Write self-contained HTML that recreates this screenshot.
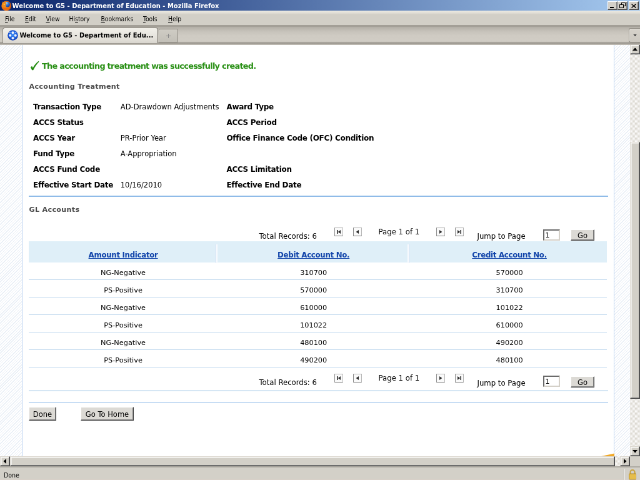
<!DOCTYPE html>
<html lang="en">
<head>
<meta charset="utf-8">
<title>Welcome to G5 - Department of Education - Mozilla Firefox</title>
<style>
html,body{margin:0;padding:0;width:640px;height:480px;overflow:hidden;background:#d4d0c8}
#root{will-change:transform;position:absolute;left:0;top:0;width:1024px;height:768px;transform:scale(.625);transform-origin:0 0;overflow:hidden;background:#d4d0c8;font-family:"DejaVu Sans","Liberation Sans",sans-serif;font-size:11.7px;color:#000}
#root *{box-sizing:border-box}
.abs{position:absolute;white-space:nowrap}
.ui{font-family:"DejaVu Sans Condensed","DejaVu Sans","Liberation Sans",sans-serif}
/* title bar */
#title{left:0;top:0;width:1024px;height:17.4px;background:linear-gradient(90deg,#0a246a 0%,#a6caf0 100%)}
#title .t{left:19.6px;top:0;height:18px;line-height:19.4px;color:#fff;font-weight:bold;font-size:11.1px}
.wb{top:2px;width:16px;height:14px;background:#d4d0c8;border:1px solid;border-color:#fff #404040 #404040 #fff;box-shadow:inset -1px -1px 0 #808080}
/* menubar */
#menu{left:0;top:17.4px;width:1024px;height:23px;background:linear-gradient(180deg,#eceae2 0,#e0ddd5 4px,#d2cfc7 6px,#d2cfc7 100%)}
#menu span{position:absolute;top:0.4px;height:24px;line-height:25px;font-size:10.3px}
#menu u{text-decoration:underline}
/* tabs */
#tabs{z-index:3;left:0;top:39.6px;width:1024px;height:32px;background:linear-gradient(180deg,#a39f97 0,#a39f97 2.5px,#b4b0a8 3.5px,#c6c2ba 10px,#cfcbc3 17px,#d0ccc4 26.4px,#aaa69e 27.6px,#9e9a92 29.4px,#b8b4ac 31px,#c8c4bc 32px)}
#tab{left:4px;top:4.6px;width:249px;height:24.4px;background:linear-gradient(180deg,#f2f0ea,#e4e1da 70%,#d9d6cf);border:1px solid #8c8880;border-right:1.4px solid #6e6a62;border-bottom:none;border-radius:4px 4px 0 0}
#tab .t{left:26.4px;top:-1px;line-height:26px;font-size:11.1px;font-weight:bold}
#newtab{left:253.6px;top:6px;width:31px;height:22px;background:linear-gradient(180deg,#cfccc4,#c3c0b8);border:1.2px solid #8e8a82;border-radius:2px 2px 0 0}
#alltabs{left:1005.6px;top:5.6px;width:20px;height:22.4px;background:linear-gradient(180deg,#d6d2ca,#cdc9c1);border:1.4px solid #908c84;border-right:none;border-radius:3px 0 0 3px;box-shadow:inset 1px 1px 0 #e6e3dc}
/* content */
#view{left:0;top:71px;width:1008px;height:659px;background:#f5f8fb;overflow:hidden;
 background-image:repeating-linear-gradient(135deg,#ffffff 0,#ffffff 2.1px,#e8eef6 2.1px,#e8eef6 3.1px)}
#page{left:35px;top:0;width:948.4px;height:659px;background:#fff;border-left:1.4px solid #bdd3f0;border-right:1.4px solid #bdd3f0}
#page .b{font-weight:bold}
.l,.th,#page .b{font-size:12px;letter-spacing:-0.3px}
#page .hd{font-size:11.2px;letter-spacing:0.28px;margin-top:1.4px}
.l{font-weight:bold;height:16px;line-height:16px;margin-top:1.8px}
.v{height:16px;line-height:16px}
#page>.v{margin-top:1.8px;font-size:11.5px}
.hd{font-weight:bold;color:#4a4a4a;height:16px;line-height:16px}
.ln{left:10px;width:927px;height:1.6px;background:#8fbbe8}
.nb{width:14px;height:14px;border:1px solid;border-color:#b4b4b4 #b4b4b4 #7c7c7c #8c8c8c;background:#fafafa}
.nb svg{position:absolute;left:0;top:0}
.btn{height:18px;line-height:18.6px;text-align:center;background:#dcdad5;border:1px solid;border-color:#fff #404040 #404040 #fff;box-shadow:inset -1px -1px 0 #808080;font-size:11.5px}
.inp{height:17.6px;width:27px;background:#fff;border:2px solid;border-color:#6a6a6a #d4d0c8 #d4d0c8 #6a6a6a;line-height:15.5px;font-size:11px;padding-left:1.5px}
.th{top:314.6px;height:34.8px;line-height:45.4px;text-align:center;font-weight:bold;color:#1144aa;padding-left:3px}
#page .th{font-size:11.8px}
.th span{text-decoration:underline}
.td{height:28px;line-height:33px;font-size:11.3px;padding-left:3px;text-align:center;border-bottom:1px solid #c0d8ee}
/* scrollbars */
.sbtn{background:#d3d0c8;border:1px solid;border-color:#dcd8d0 #404040 #404040 #dcd8d0;box-shadow:inset -1px -1px 0 #808080, inset 1.6px 1.6px 0 #fbfaf8}
.track{background:#ebe9e5 repeating-conic-gradient(#ffffff 0 25%,#d8d4cc 0 50%) 0 0/2px 2px}
#status{left:0;top:745.6px;width:1024px;height:22.4px;background:#d3d0c8;border-top:2.4px solid #aeaba3;border-bottom:1.4px solid #d8d0c8}
</style>
</head>
<body>
<div id="root">

<!-- title bar -->
<div id="title" class="abs ui">
  <svg class="abs" style="left:1.6px;top:0.8px" width="16.4" height="16.4" viewBox="0 0 16 16"><defs><radialGradient id="fo" cx="0.4" cy="0.45" r="0.65"><stop offset="0" stop-color="#fbc23a"/><stop offset="0.55" stop-color="#ee7c14"/><stop offset="1" stop-color="#b8420a"/></radialGradient><radialGradient id="gl" cx="0.35" cy="0.25" r="0.8"><stop offset="0" stop-color="#a8dcf8"/><stop offset="0.45" stop-color="#2f78d8"/><stop offset="1" stop-color="#143c9c"/></radialGradient></defs><circle cx="8" cy="8.2" r="7.7" fill="url(#fo)"/><circle cx="9.4" cy="6" r="4.3" fill="url(#gl)"/><path d="M1.2 4.6 L2.6 1.2 L4.6 3.4 C6.6 2.6 8.4 3.6 8.2 5.4 L6.4 6.6 C8 7.6 8.2 9.6 6.6 10.8 C4.6 11.8 2.2 10.4 1.6 8 Z" fill="#f08a1a"/><path d="M3 5.4 C4.2 4.6 5.6 4.8 6.4 5.6 L4.6 6.8 Z" fill="#ffd048"/><path d="M6.6 10.8 C9 12.2 12.4 11 13.8 8.2 C14.6 11.4 12 14.6 8.4 14.6 C5.4 14.6 3.2 12.8 2.4 10.2 C3.6 11.2 5.2 11.4 6.6 10.8Z" fill="#e8680e"/></svg>
  <div class="abs t">Welcome to G5 - Department of Education - Mozilla Firefox</div>
  <div class="abs wb" style="left:972px"><div class="abs" style="left:3px;top:8.2px;width:6.4px;height:1.8px;background:#000"></div></div>
  <div class="abs wb" style="left:988px"><div class="abs" style="left:5px;top:1px;width:6.5px;height:6px;border:1px solid #000;border-top-width:1.8px"></div><div class="abs" style="left:2.4px;top:4px;width:6.5px;height:6px;border:1px solid #000;border-top-width:1.8px;background:#d4d0c8"></div></div>
  <div class="abs wb" style="left:1006px"><svg class="abs" style="left:2px;top:2px" width="10" height="9" viewBox="0 0 10 9"><path d="M1.5 1.5 L8.5 7.5 M8.5 1.5 L1.5 7.5" stroke="#000" stroke-width="1.4"/></svg></div>
</div>

<!-- menu bar -->
<div id="menu" class="abs ui">
  <span style="left:8px"><u>F</u>ile</span>
  <span style="left:40px"><u>E</u>dit</span>
  <span style="left:73.5px"><u>V</u>iew</span>
  <span style="left:110.5px">Hi<u>s</u>tory</span>
  <span style="left:161.5px"><u>B</u>ookmarks</span>
  <span style="left:229px"><u>T</u>ools</span>
  <span style="left:269px"><u>H</u>elp</span>
</div>

<!-- tab strip -->
<div id="tabs" class="abs ui">
  <div id="tab" class="abs">
    <svg class="abs" style="left:6.6px;top:3px" width="17" height="17" viewBox="0 0 16 16"><defs><radialGradient id="fv" cx="0.5" cy="0.45" r="0.55"><stop offset="0" stop-color="#3c8cf4"/><stop offset="0.7" stop-color="#1c5cdc"/><stop offset="1" stop-color="#0c34a8"/></radialGradient></defs><circle cx="8" cy="8" r="7.8" fill="url(#fv)"/><circle cx="8" cy="4" r="1.9" fill="#eef2fa"/><circle cx="4" cy="8.2" r="1.9" fill="#eef2fa"/><circle cx="12" cy="8.2" r="1.9" fill="#eef2fa"/><circle cx="8" cy="12.2" r="1.9" fill="#eef2fa"/><circle cx="3.6" cy="3.8" r="1" fill="#9cc0f6"/><circle cx="12.4" cy="3.8" r="1" fill="#9cc0f6"/></svg>
    <div class="abs t">Welcome to G5 - Department of Edu...</div>
  </div>
  <div id="newtab" class="abs"><div class="abs" style="left:11px;top:10px;width:7px;height:1px;background:#888"></div><div class="abs" style="left:14px;top:7px;width:1px;height:7px;background:#888"></div></div>
  <div id="alltabs" class="abs"><svg class="abs" style="left:5px;top:8px" width="8" height="5" viewBox="0 0 8 5"><path d="M1.2 1 H6.8 L4 4Z" fill="#444"/></svg></div>
</div>

<!-- content viewport -->
<div id="view" class="abs">
 <div id="page" class="abs">
  <!-- coordinates inside #page: x = orig-35-1(border), y = orig-71 -->
  <svg class="abs" style="left:10px;top:24px" width="18" height="21" viewBox="10 24 18 21"><path d="M12.8 36.6 L15.2 34.8 L16.6 37.6 C19 33 22 29.6 25.6 26.8 L26.5 27.7 C22.8 31.6 19.8 36 17.2 41.2 L15.2 41.2 Z" fill="#248c10"/></svg>
  <div class="abs b" style="left:31px;top:27.1px;height:16px;line-height:16px;color:#2a9016;font-size:12.9px;letter-spacing:-0.75px">The accounting treatment was successfully created.</div>

  <div class="abs hd" style="left:10.5px;top:58.6px">Accounting Treatment</div>

  <div class="abs l" style="left:17px;top:89.8px">Transaction Type</div>
  <div class="abs v" style="left:156.8px;top:89.8px">AD-Drawdown Adjustments</div>
  <div class="abs l" style="left:326.4px;top:89.8px">Award Type</div>

  <div class="abs l" style="left:17px;top:114.9px">ACCS Status</div>
  <div class="abs l" style="left:326.4px;top:114.9px">ACCS Period</div>

  <div class="abs l" style="left:17px;top:140px">ACCS Year</div>
  <div class="abs v" style="left:156.8px;top:140px">PR-Prior Year</div>
  <div class="abs l" style="left:326.4px;top:140px">Office Finance Code (OFC) Condition</div>

  <div class="abs l" style="left:17px;top:165.1px">Fund Type</div>
  <div class="abs v" style="left:156.8px;top:165.1px">A-Appropriation</div>

  <div class="abs l" style="left:17px;top:190.2px">ACCS Fund Code</div>
  <div class="abs l" style="left:326.4px;top:190.2px">ACCS Limitation</div>

  <div class="abs l" style="left:17px;top:215.3px">Effective Start Date</div>
  <div class="abs v" style="left:156.8px;top:215.3px">10/16/2010</div>
  <div class="abs l" style="left:326.4px;top:215.3px">Effective End Date</div>

  <div class="abs ln" style="top:242px"></div>

  <div class="abs hd" style="left:10.5px;top:255.4px">GL Accounts</div>

  <!-- top pager -->
  <div class="abs" style="left:0;top:292.7px">
   <div class="abs v" style="left:378.4px;top:6px">Total Records: 6</div>
   <div class="abs nb" style="left:498.6px;top:0"><svg width="12" height="12" viewBox="0 0 12 12"><path d="M3 3h1.6v6H3zM9 3 L4.8 6 L9 9Z" fill="#2a2a2a"/></svg></div>
   <div class="abs nb" style="left:528.8px;top:0"><svg width="12" height="12" viewBox="0 0 12 12"><path d="M8 3 L3.6 6 L8 9Z" fill="#2a2a2a"/></svg></div>
   <div class="abs v" style="left:569.6px;top:-0.8px">Page 1 of 1</div>
   <div class="abs nb" style="left:661.8px;top:0"><svg width="12" height="12" viewBox="0 0 12 12"><path d="M4 3 L8.4 6 L4 9Z" fill="#2a2a2a"/></svg></div>
   <div class="abs nb" style="left:692px;top:0"><svg width="12" height="12" viewBox="0 0 12 12"><path d="M7.4 3H9v6H7.4zM3 3 L7.2 6 L3 9Z" fill="#2a2a2a"/></svg></div>
   <div class="abs v" style="left:727.5px;top:6.5px">Jump to Page</div>
   <div class="abs inp" style="left:833px;top:3.3px">1</div>
   <div class="abs btn" style="left:877px;top:3.8px;width:38px">Go</div>
  </div>

  <!-- table header -->
  <div class="abs" style="left:9.6px;top:314.6px;width:925px;height:34.8px;background:#dfeff8"></div>
  <div class="abs" style="left:310.2px;top:319.5px;width:2px;height:30.5px;background:#f8fbfe;box-shadow:-0.8px 0 0 #d4daf4"></div>
  <div class="abs" style="left:616.2px;top:319.5px;width:2px;height:30.5px;background:#f8fbfe;box-shadow:0.8px 0 0 #d4daf4"></div>
  <div class="abs th" style="left:9px;width:301.2px"><span>Amount Indicator</span></div>
  <div class="abs th" style="left:312.2px;width:304px"><span>Debit Account No.</span></div>
  <div class="abs th" style="left:618.2px;width:318.8px"><span>Credit Account No.</span></div>

  <!-- rows -->
  <div class="abs td" style="left:9.6px;width:925px;top:349px"></div>
  <div class="abs td" style="left:9.6px;width:925px;top:377px"></div>
  <div class="abs td" style="left:9.6px;width:925px;top:405px"></div>
  <div class="abs td" style="left:9.6px;width:925px;top:433px"></div>
  <div class="abs td" style="left:9.6px;width:925px;top:461px"></div>
  <div class="abs td" style="left:9.6px;width:925px;top:489px"></div>

  <div class="abs td" style="border:0;left:9px;width:301.2px;top:349px">NG-Negative</div>
  <div class="abs td" style="border:0;left:312.2px;width:304px;top:349px">310700</div>
  <div class="abs td" style="border:0;left:618.2px;width:318.8px;top:349px">570000</div>

  <div class="abs td" style="border:0;left:9px;width:301.2px;top:377px">PS-Positive</div>
  <div class="abs td" style="border:0;left:312.2px;width:304px;top:377px">570000</div>
  <div class="abs td" style="border:0;left:618.2px;width:318.8px;top:377px">310700</div>

  <div class="abs td" style="border:0;left:9px;width:301.2px;top:405px">NG-Negative</div>
  <div class="abs td" style="border:0;left:312.2px;width:304px;top:405px">610000</div>
  <div class="abs td" style="border:0;left:618.2px;width:318.8px;top:405px">101022</div>

  <div class="abs td" style="border:0;left:9px;width:301.2px;top:433px">PS-Positive</div>
  <div class="abs td" style="border:0;left:312.2px;width:304px;top:433px">101022</div>
  <div class="abs td" style="border:0;left:618.2px;width:318.8px;top:433px">610000</div>

  <div class="abs td" style="border:0;left:9px;width:301.2px;top:461px">NG-Negative</div>
  <div class="abs td" style="border:0;left:312.2px;width:304px;top:461px">480100</div>
  <div class="abs td" style="border:0;left:618.2px;width:318.8px;top:461px">490200</div>

  <div class="abs td" style="border:0;left:9px;width:301.2px;top:489px">PS-Positive</div>
  <div class="abs td" style="border:0;left:312.2px;width:304px;top:489px">490200</div>
  <div class="abs td" style="border:0;left:618.2px;width:318.8px;top:489px">480100</div>

  <!-- bottom pager -->
  <div class="abs" style="left:0;top:527.1px">
   <div class="abs v" style="left:378.4px;top:6px">Total Records: 6</div>
   <div class="abs nb" style="left:498.6px;top:0"><svg width="12" height="12" viewBox="0 0 12 12"><path d="M3 3h1.6v6H3zM9 3 L4.8 6 L9 9Z" fill="#2a2a2a"/></svg></div>
   <div class="abs nb" style="left:528.8px;top:0"><svg width="12" height="12" viewBox="0 0 12 12"><path d="M8 3 L3.6 6 L8 9Z" fill="#2a2a2a"/></svg></div>
   <div class="abs v" style="left:569.6px;top:-0.8px">Page 1 of 1</div>
   <div class="abs nb" style="left:661.8px;top:0"><svg width="12" height="12" viewBox="0 0 12 12"><path d="M4 3 L8.4 6 L4 9Z" fill="#2a2a2a"/></svg></div>
   <div class="abs nb" style="left:692px;top:0"><svg width="12" height="12" viewBox="0 0 12 12"><path d="M7.4 3H9v6H7.4zM3 3 L7.2 6 L3 9Z" fill="#2a2a2a"/></svg></div>
   <div class="abs v" style="left:727.5px;top:6.5px">Jump to Page</div>
   <div class="abs inp" style="left:833px;top:3.3px">1</div>
   <div class="abs btn" style="left:877px;top:3.8px;width:38px">Go</div>
  </div>

  <div class="abs ln" style="top:553.4px;background:#d5e6f4"></div>
  <div class="abs ln" style="top:571.8px"></div>

  <div class="abs btn" style="left:10px;top:580px;width:44px;height:22.4px;line-height:23.5px">Done</div>
  <div class="abs btn" style="left:93px;top:580px;width:85px;height:22.4px;line-height:23.5px">Go To Home</div>

  <!-- cropped orange element at bottom right -->
  <svg class="abs" style="left:926px;top:654px" width="21" height="5" viewBox="0 0 21 5"><path d="M0 5 L21 0.5 L21 5Z" fill="#f0a828"/></svg>
 </div>
</div>

<!-- vertical scrollbar -->
<div class="abs track" style="left:1008px;top:71px;width:16px;height:659px"></div>
<div class="abs sbtn" style="left:1008px;top:71px;width:16px;height:16px"><svg width="14" height="14" viewBox="0 0 14 14"><path d="M3 9 L7 4.5 L11 9Z" fill="#000"/></svg></div>
<div class="abs sbtn" style="left:1008px;top:227px;width:16px;height:411px"></div>
<div class="abs sbtn" style="left:1008px;top:714px;width:16px;height:16px"><svg width="14" height="14" viewBox="0 0 14 14"><path d="M3 5 L7 9.5 L11 5Z" fill="#000"/></svg></div>

<!-- horizontal scrollbar -->
<div class="abs track" style="left:0;top:729.8px;width:1008px;height:16px"></div>
<div class="abs sbtn" style="left:0;top:729.8px;width:16px;height:16px"><svg width="14" height="14" viewBox="0 0 14 14"><path d="M9 3 L4.5 7 L9 11Z" fill="#000"/></svg></div>
<div class="abs sbtn" style="left:16px;top:729.8px;width:968px;height:16px"></div>
<div class="abs sbtn" style="left:992px;top:729.8px;width:16px;height:16px"><svg width="14" height="14" viewBox="0 0 14 14"><path d="M5 3 L9.5 7 L5 11Z" fill="#000"/></svg></div>
<div class="abs" style="left:1008px;top:729.8px;width:16px;height:16px;background:#d3d0c8"></div>

<!-- status bar -->
<div id="status" class="abs ui">
  <div class="abs" style="left:6px;top:1px;height:22px;line-height:22px;font-size:10.5px">Done</div>
  <div class="abs" style="left:998px;top:2px;width:1px;height:19px;background:#a8a49c;border-right:1px solid #fff;width:2px"></div>
  <svg class="abs" style="left:1004px;top:2px" width="16" height="18" viewBox="0 0 16 18"><path d="M4.5 9 V5.5 a3.5 3.5 0 0 1 7 0 V9" fill="none" stroke="#c9a23a" stroke-width="2"/><rect x="2.5" y="8" width="11" height="9" rx="1" fill="#e6bd4a" stroke="#b08a2a" stroke-width="1"/></svg>
</div>

</div>
</body>
</html>
